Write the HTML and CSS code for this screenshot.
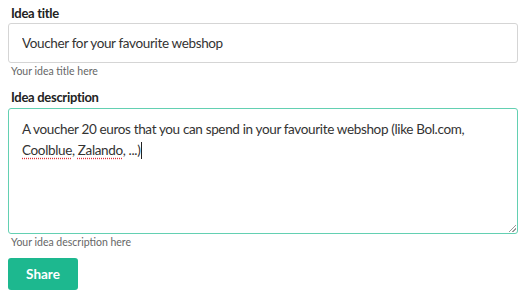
FILE: index.html
```html
<!DOCTYPE html>
<html lang="en">
<head>
  <meta charset="UTF-8" />
  <title>Share an idea</title>
  <link rel="stylesheet" href="styles.css">
</head>
<body>
  <form class="idea-form">
    <div class="field">
      <label class="label" for="title">Idea title</label>
      <input class="input" id="title" type="text" value="Voucher for your favourite webshop">
      <div class="help">Your idea title here</div>
    </div>
    <div class="field">
      <label class="label" for="desc">Idea description</label>
      <div class="textarea focus" id="desc">A voucher 20 euros that you can spend in your favourite webshop (like Bol.com, <span class="typo">Coolblue</span>, <span class="typo">Zalando</span>, ...)<span class="caret"></span><span class="grip"></span></div>
      <div class="help">Your idea description here</div>
    </div>
    <button class="btn" type="button">Share</button>
  </form>
</body>
</html>
```

FILE: styles.css
```css
body {
  margin: 0;
  background: #fff;
  font-family: Lato, "Open Sans", sans-serif;
  color: #333;
}
.idea-form {
  padding: 4px 12px 0 8px;
  display: flex;
  flex-direction: column;
}
.field { display: flex; flex-direction: column; }
.label {
  font-size: 13px;
  font-weight: bold;
  letter-spacing: -0.3px;
  color: #222;
  padding-left: 3px;
  line-height: 19px;
}
.input {
  height: 40px;
  box-sizing: border-box;
  border: 1px solid #d5d5d5;
  border-radius: 3px;
  padding: 0 13px;
  font-family: inherit;
  font-size: 13.5px;
  letter-spacing: -0.35px;
  color: #333;
  outline: none;
}
.help {
  font-size: 10.5px;
  color: #666;
  padding-left: 3px;
  line-height: 14px;
  margin-top: 1px;
}
.field + .field { margin-top: 10px; }
.field + .field .label { margin-bottom: 1px; }
.textarea {
  position: relative;
  height: 126px;
  box-sizing: border-box;
  border: 1px solid #63d0b2;
  border-radius: 3px;
  padding: 10px 13px;
  font-size: 13.5px;
  letter-spacing: -0.35px;
  line-height: 21px;
  color: #333;
}
.typo {
  text-decoration: underline dotted #e0303a;
  text-underline-offset: 3px;
}
.caret {
  display: inline-block;
  width: 1px;
  height: 17px;
  background: #222;
  vertical-align: -4px;
  margin-left: 1px;
}
.grip {
  position: absolute;
  right: 1px;
  bottom: 1px;
  width: 7px;
  height: 7px;
  background: linear-gradient(135deg, transparent 45%, #999 46%, #999 54%, transparent 55%, transparent 70%, #999 71%, #999 79%, transparent 80%);
}
.btn {
  align-self: flex-start;
  margin-top: 9px;
  width: 70px;
  height: 32px;
  border: none;
  border-radius: 3px;
  background: #1db88f;
  color: #fff;
  font-family: inherit;
  font-size: 13.5px;
  font-weight: bold;
  cursor: pointer;
}
```
